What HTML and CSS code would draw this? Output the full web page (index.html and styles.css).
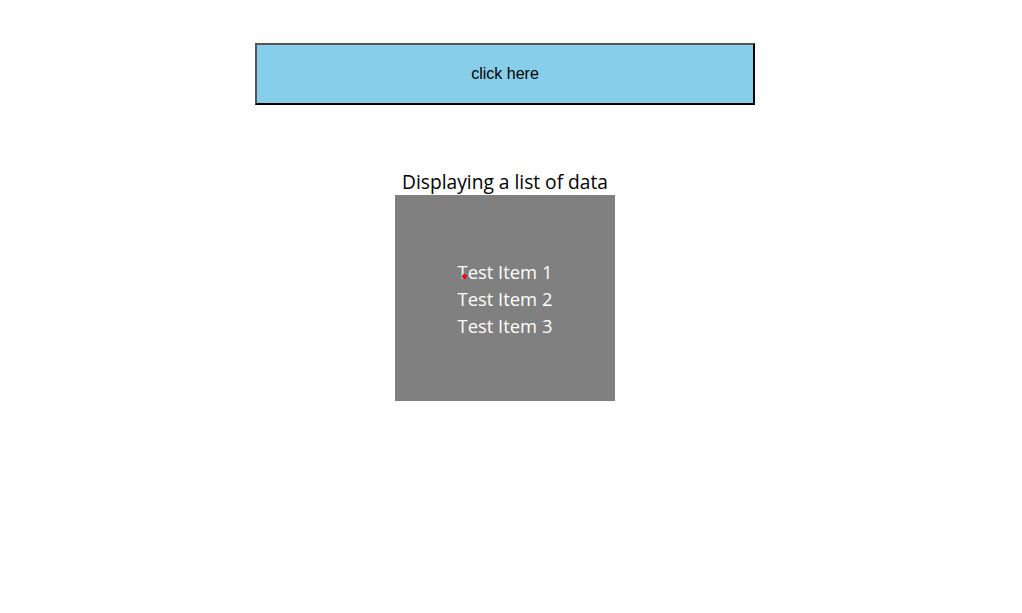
FILE: index.html
```html
<!DOCTYPE html>
<html>
<head>
<meta charset="utf-8">
<link rel="stylesheet" href="styles.css">
</head>
<body>
<div class="app">
  <button class="btn">click here</button>
  <div class="title">Displaying a list of data</div>
  <div class="list">
    <div class="item">Test Item 1</div>
    <div class="item">Test Item 2</div>
    <div class="item">Test Item 3</div>
    <span class="cursor-dot"></span>
  </div>
</div>
</body>
</html>
```
FILE: styles.css
```css
html, body {
  margin: 0;
  padding: 0;
  background: #fff;
}
.app {
  width: 1010px;
  display: flex;
  flex-direction: column;
  align-items: center;
  padding-top: 43px;
  font-family: "Open Sans", "Noto Sans", sans-serif;
}
.btn {
  box-sizing: border-box;
  width: 500px;
  height: 62px;
  background: #87ceeb;
  border: 2px solid;
  border-color: #555 #000 #000 #555;
  font-family: "Liberation Sans", Arial, sans-serif;
  font-size: 16px;
  color: #000;
  padding: 0;
  margin: 0;
}
.title {
  margin-top: 63px;
  font-size: 19.2px;
  line-height: 27px;
  color: #000;
}
.list {
  position: relative;
  width: 220px;
  height: 206px;
  background: #808080;
  display: flex;
  flex-direction: column;
  align-items: center;
  justify-content: center;
}
.item {
  color: #fff;
  font-size: 18.4px;
  line-height: 27px;
}
.cursor-dot {
  position: absolute;
  left: 67px;
  top: 79px;
  width: 5px;
  height: 5px;
  border-radius: 50%;
  background: #e0141e;
}
```
